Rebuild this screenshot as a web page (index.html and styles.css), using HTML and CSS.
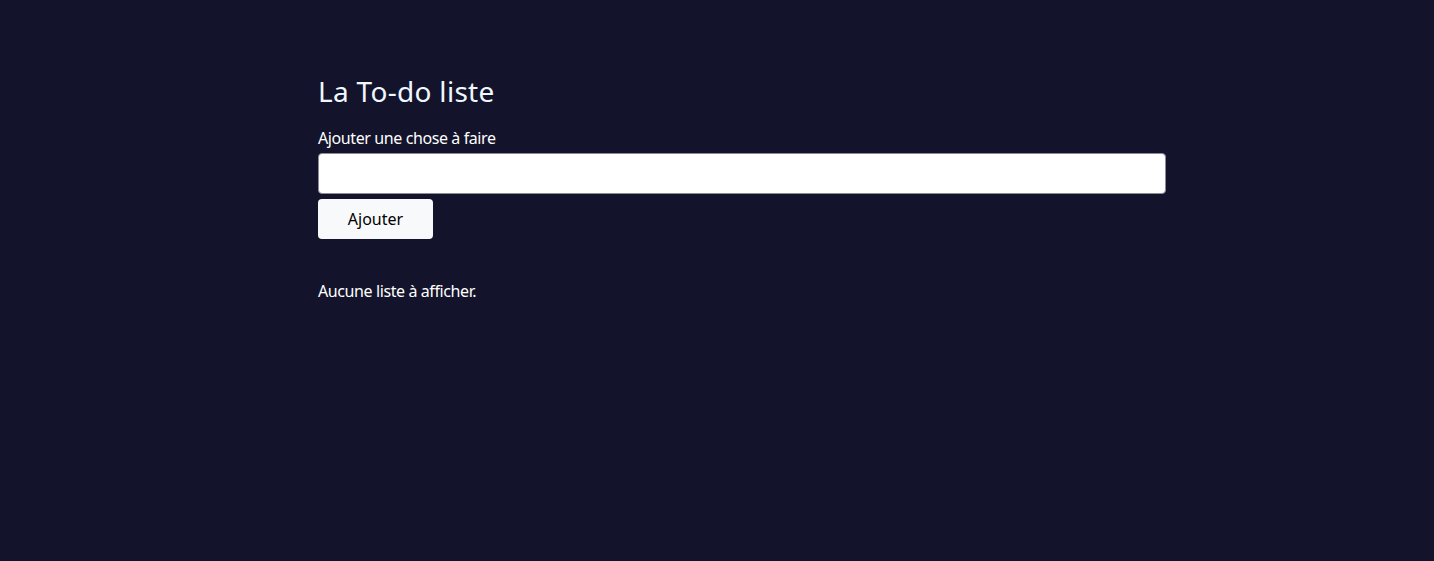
FILE: index.html
```html
<!DOCTYPE html>
<html lang="fr">
<head>
<meta charset="utf-8">
<title>La To-do liste</title>
<link rel="stylesheet" href="styles.css">
</head>
<body>
<main class="page">
  <h1 class="title">La To-do liste</h1>
  <form class="add-form">
    <label class="label" for="todo">Ajouter une chose à faire</label>
    <input class="input" id="todo" type="text">
    <button class="btn" type="button">Ajouter</button>
  </form>
  <p class="empty">Aucune liste à afficher.</p>
</main>
</body>
</html>
```

FILE: styles.css
```css
html, body {
  margin: 0;
  padding: 0;
  height: 100%;
}
body {
  background: #13132b;
  color: #ffffff;
  font-family: "Noto Sans", "Liberation Sans", sans-serif;
  font-size: 16px;
  line-height: 1.5;
  letter-spacing: -0.4px;
}
.page {
  width: 848px;
  margin-left: 318px;
  padding-top: 75px;
}
.title {
  margin: 0 0 17px;
  font-size: 28px;
  font-weight: 400;
  line-height: 1.2;
  letter-spacing: 0.3px;
  color: #f0f8ff;
}
.add-form {
  display: flex;
  flex-direction: column;
  align-items: flex-start;
}
.label {
  margin-bottom: 3px;
}
.input {
  box-sizing: border-box;
  width: 100%;
  height: 41px;
  border: 1px solid #8a8a99;
  border-radius: 4px;
  background: #fff;
  font: inherit;
  padding: 6px 12px;
  margin: 0 0 5px;
}
.btn {
  box-sizing: border-box;
  width: 115px;
  height: 40px;
  border: 0;
  border-radius: 4px;
  background: #f8f9fa;
  color: #000;
  font: inherit;
  padding: 0;
}
.empty {
  margin: 40px 0 0;
}
```
